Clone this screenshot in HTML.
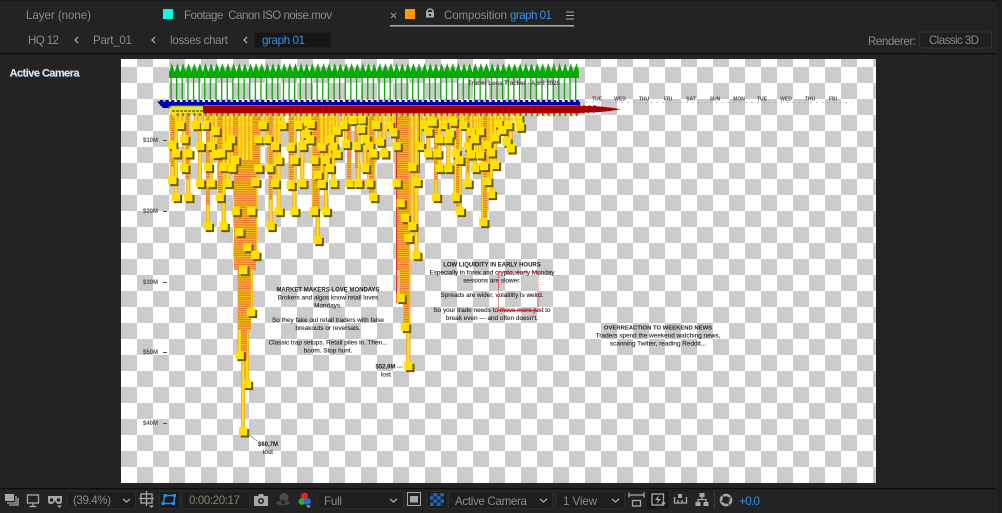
<!DOCTYPE html>
<html><head><meta charset="utf-8"><style>
html,body{margin:0;padding:0;background:#232323;overflow:hidden}
svg{display:block;position:absolute;left:0;top:0}
text{font-family:"Liberation Sans",sans-serif}
.u{font-size:11.6px;fill:#8a8a8a}
.b{fill:#3a8fe6}
.c{font-size:6.4px;fill:#2c2428;text-anchor:middle;stroke:#2c2428;stroke-width:.12}
.h{font-size:6px;fill:#1d1a1a;text-anchor:middle;font-weight:bold}
.d{font-size:5px;fill:#5a4a50;text-anchor:middle;font-weight:bold}
.y{font-size:6px;fill:#555;font-weight:bold}
.i{fill:none;stroke:#a8a8a8;stroke-width:1.3}
.f{fill:#a8a8a8}
</style></head><body>
<svg width="1002" height="513" viewBox="0 0 1002 513">
<defs>
<pattern id="ck" patternUnits="userSpaceOnUse" x="121" y="51" width="32" height="32"><rect width="32" height="32" fill="#fff"/><rect y="16" width="16" height="16" fill="#cbcbcb"/><rect x="16" width="16" height="16" fill="#cbcbcb"/></pattern>
<pattern id="tri" patternUnits="userSpaceOnUse" x="169" y="63" width="5.62" height="15"><path d="M0 9L2.81 0L5.62 9V15H0z" fill="#08a808"/></pattern>
<pattern id="stem" patternUnits="userSpaceOnUse" x="170.4" y="78" width="5.62" height="22"><rect width="1.3" height="22" fill="#08a808"/></pattern>
<pattern id="st" patternUnits="userSpaceOnUse" width="4" height="2.2"><rect width="4" height="2.2" fill="#f6c41c"/><rect width="4" height="1" fill="#e56a30"/></pattern>
<pattern id="tk" patternUnits="userSpaceOnUse" x="170" y="113" width="5.62" height="5"><rect x="1" width="2" height="3" fill="#6d6a55"/><rect x="3" width="1.5" height="4" fill="#e8d25a"/></pattern>
<pattern id="bd" patternUnits="userSpaceOnUse" x="160" y="100" width="5.62" height="2"><rect width="3" height="2" fill="#0000a8"/></pattern>
<pattern id="rd" patternUnits="userSpaceOnUse" x="578" y="105" width="5" height="8"><path d="M0 0L5 1.5V6.5L0 8z" fill="#a80000"/></pattern>
<marker id="m" markerUnits="userSpaceOnUse" overflow="visible" markerWidth="1" markerHeight="1" refX="0" refY="0"><rect x="-6" y="-1500" width="12" height="1500" fill="#f2a81e"/><rect x="-4" y="-1500" width="8" height="1500" fill="#fbd010"/><rect x="-1.500" y="-1500" width="3" height="1500" fill="#ffe33a"/></marker>
<clipPath id="cl"><rect x="121" y="113" width="755" height="370"/></clipPath>
<g id="pts" transform="translate(140 100) scale(.3333)">
<path d="M120 75h.01M167 75h.01M195 75h.01M227 93h.01M368 75h.01M427 75h.01M475 75h.01M503 65h.01M512 72h.01M498 102h.01M510 118h.01M590 92h.01M97 135h.01M133 117h.01M108 160h.01M145 160h.01M180 138h.01M213 138h.01M228 162h.01M263 138h.01M273 117h.01M243 160h.01M355 117h.01M382 117h.01M405 138h.01M452 141h.01M487 138h.01M545 141h.01M570 117h.01M580 140h.01M590 162h.01M285 180h.01M133 204h.01M204 201h.01M250 201h.01M276 203h.01M355 204h.01M388 204h.01M415 180h.01M463 180h.01M523 180h.01M557 180h.01M570 204h.01M97 240h.01M180 249h.01M213 249h.01M263 249h.01M346 246h.01M405 249h.01M452 255h.01M487 249h.01M533 225h.01M545 252h.01M580 249h.01M108 291h.01M145 291h.01M239 291h.01M287 333h.01M334 333h.01M416 333h.01M463 333h.01M522 333h.01M558 333h.01M204 378h.01M251 378h.01M392 378h.01M298 396h.01M533 420h.01M322 441h.01M346 465h.01M310 507h.01"/>
<path transform="translate(600 0)" d="M10 75h.01M38 60h.01M65 58h.01M108 75h.01M148 75h.01M160 97h.01M253 75h.01M278 65h.01M310 75h.01M340 65h.01M370 75h.01M475 70h.01M505 75h.01M540 80h.01M535 55h.01M63 87h.01M77 117h.01M120 125h.01M18 132h.01M50 138h.01M88 138h.01M100 160h.01M133 160h.01M170 138h.01M240 138h.01M265 95h.01M330 100h.01M298 117h.01M325 117h.01M393 95h.01M420 93h.01M405 117h.01M465 112h.01M487 90h.01M500 125h.01M512 145h.01M383 138h.01M442 135h.01M453 157h.01M265 160h.01M292 160h.01M347 160h.01M393 163h.01M420 163h.01M358 180h.01M75 204h.01M217 201h.01M298 204h.01M325 204h.01M405 204h.01M432 198h.01M465 195h.01M28 249h.01M55 249h.01M88 249h.01M170 249h.01M230 246h.01M383 249h.01M442 243h.01M453 282h.01M100 291h.01M288 291h.01M347 291h.01M360 333h.01M182 309h.01M195 354h.01M217 378h.01M430 366h.01M205 414h.01M229 465h.01"/>
<path transform="translate(240 510)" d="M70 0h.01M93 126h.01M59 255h.01M81 342h.01M69 484h.01M542 84h.01M555 171h.01M565 288h.01"/>
</g>
</defs>

<rect width="1002" height="513" fill="#232323"/>
<rect width="1002" height="1.5" fill="#161616"/>
<rect x="997" y="0" width="5" height="513" fill="#1e1e1e"/>
<rect x="0" y="53" width="996" height="1.2" fill="#0c0c0c"/>
<rect x="0" y="488" width="996" height="1.2" fill="#0c0c0c"/>

<!-- top tabs -->
<text class="u" x="26" y="19" textLength="65">Layer  (none)</text>
<rect x="163" y="9" width="10" height="10" fill="#00ffe1"/>
<text class="u" x="184" y="19" textLength="148" xml:space="preserve">Footage  Canon ISO noise.mov</text>
<path d="M391 13l5 5M396 13l-5 5" stroke="#999" stroke-width="1"/>
<rect x="405" y="9" width="10" height="10" fill="#ff9a00"/>
<path d="M427 12.500v-1a3 2.500 0 0 1 6 0v1" fill="none" stroke="#aaa" stroke-width="1.400"/><rect x="426" y="12" width="8" height="5.500" fill="#aaa"/><rect x="429" y="14" width="2" height="2" fill="#232323"/>
<text class="u" x="444" y="19" textLength="63">Composition</text>
<text class="u b" x="510" y="19" textLength="42">graph 01</text>
<path d="M566 12h8M566 15.500h8M566 19h8" stroke="#aaa" stroke-width="1"/>
<rect x="390" y="25" width="184" height="1.600" fill="#a6a6a6"/>

<!-- breadcrumb -->
<text class="u" x="28" y="44" textLength="31">HQ 12</text>
<path d="M78 37l-3 3 3 3" class="i" stroke-width="1"/>
<text class="u" x="93" y="44" textLength="39">Part_01</text>
<path d="M155 37l-3 3 3 3" class="i" stroke-width="1"/>
<text class="u" x="170" y="44" textLength="58">losses chart</text>
<path d="M247 37l-3 3 3 3" class="i" stroke-width="1"/>
<rect x="253" y="32" width="79" height="16" rx="2" fill="#161616" stroke="#2a2a2a"/>
<text class="u b" x="262" y="44" textLength="43">graph 01</text>
<text class="u" x="868" y="45" textLength="48">Renderer:</text>
<rect x="919.500" y="32" width="72" height="16" rx="2" fill="#1f1f1f" stroke="#333"/>
<text class="u" x="929" y="44" textLength="50">Classic 3D</text>

<text x="10" y="77" font-size="11" font-weight="bold" fill="#4a7a9a" textLength="70">Active Camera</text>
<text x="9.500" y="76.500" font-size="11" font-weight="bold" fill="#e2e2e2" textLength="70">Active Camera</text>

<!-- comp area -->
<rect x="121" y="59" width="755" height="424" fill="url(#ck)"/>

<!-- header -->
<rect x="169" y="63" width="410" height="15" fill="url(#tri)"/>
<rect x="169" y="78" width="408" height="22" fill="url(#stem)"/>
<text x="468" y="85" font-size="6.200" font-weight="bold" fill="#4a4a4a" textLength="92">Trader Loss Tracker - April 2025</text>

<!-- bars -->
<g clip-path="url(#cl)">
<use href="#pts" marker-start="url(#m)" marker-mid="url(#m)" marker-end="url(#m)" fill="none" stroke="none"/>
<g fill="url(#st)">
<rect x="171" y="113" width="3.500" height="54"/><rect x="186" y="113" width="3" height="67"/>
<rect x="206" y="113" width="3.500" height="92"/><rect x="218" y="113" width="4.500" height="84"/>
<rect x="233" y="113" width="4" height="60"/><rect x="253" y="113" width="4" height="60"/>
<rect x="234" y="160" width="22" height="110"/><rect x="238" y="270" width="13" height="60"/><rect x="241" y="330" width="6" height="30"/>
<rect x="257" y="113" width="3" height="57"/><rect x="269" y="113" width="3.500" height="87"/>
<rect x="289" y="113" width="5" height="67"/><rect x="313" y="113" width="6" height="97"/>
<rect x="347" y="113" width="4" height="67"/><rect x="355" y="113" width="3" height="55"/>
<rect x="369" y="113" width="5" height="82"/>
<rect x="397" y="113" width="12" height="157"/><rect x="400" y="270" width="9" height="30"/><rect x="404" y="300" width="5" height="25"/>
<rect x="434" y="113" width="3.500" height="67"/><rect x="456" y="113" width="3.500" height="97"/>
<rect x="467" y="113" width="2.500" height="60"/><rect x="483" y="113" width="4.500" height="107"/>
</g>
<rect x="419" y="113" width="1" height="60" fill="#d63a2a"/>
<rect x="396" y="113" width="1.200" height="190" fill="#d63a2a"/>
<use href="#pts" transform="translate(2 2)" fill="none" stroke="#6a5a00" stroke-width="25" stroke-linecap="square"/>
<use href="#pts" fill="none" stroke="#ffe000" stroke-width="25" stroke-linecap="square"/>
</g>
<rect x="170" y="113" width="408" height="5" fill="url(#tk)"/>

<!-- bands -->
<rect x="160" y="100" width="420" height="2" fill="url(#bd)"/>
<rect x="160" y="102" width="420" height="3.500" fill="#0000a8"/>
<path d="M157 101.500H172V105L168 108H163z" fill="#0000a8"/>
<path d="M168 109L172 105.500H204V113H178L172 116z" fill="#f6e020"/>
<path d="M168 109L172 106H204" fill="none" stroke="#3cb52c" stroke-width=".8"/>
<path d="M204 105.800H580" fill="none" stroke="#b8a818" stroke-width=".8"/>
<path d="M172 111H204" stroke="#332" stroke-width="1" stroke-dasharray="3 1"/>
<rect x="203" y="106" width="376" height="7.300" fill="#a80000"/>
<rect x="578" y="105.500" width="20" height="8" fill="url(#rd)"/>
<path d="M578 106L600 106.500L610 107.500L621 109.300L610 111L600 112L578 113z" fill="#a80000"/>

<!-- timeline -->
<path d="M580 102.500H852" stroke="#aaa" stroke-width="1" stroke-dasharray="1.500 4.400"/>
<g class="d">
<text class="d" x="597" y="100.500">TUE</text><text class="d" x="620" y="100.500">WED</text><text class="d" x="644" y="100.500">THU</text><text class="d" x="668" y="100.500">FRI</text><text class="d" x="691" y="100.500">SAT</text><text class="d" x="715" y="100.500">SUN</text><text class="d" x="739" y="100.500">MON</text><text class="d" x="762" y="100.500">TUE</text><text class="d" x="786" y="100.500">WED</text><text class="d" x="810" y="100.500">THU</text><text class="d" x="833" y="100.500">FRI</text>
</g>

<!-- axis -->
<text class="y" x="143" y="142">$10M</text><rect x="163" y="140" width="4" height="1" fill="#555"/>
<text class="y" x="143" y="213">$20M</text><rect x="163" y="211" width="4" height="1" fill="#555"/>
<text class="y" x="143" y="284">$30M</text><rect x="163" y="282" width="4" height="1" fill="#555"/>
<text class="y" x="143" y="354">$50M</text><rect x="163" y="352" width="4" height="1" fill="#555"/>
<text class="y" x="143" y="425">$40M</text><rect x="163" y="423" width="4" height="1" fill="#555"/>

<!-- copy -->
<text class="h" x="328" y="291.500">MARKET MAKERS LOVE MONDAYS</text>
<text class="c" x="328" y="299.500">Brokers and algos know retail loves</text>
<text class="c" x="328" y="307.500">Mondays.</text>
<text class="c" x="328" y="322">So they fake out retail traders with false</text>
<text class="c" x="328" y="330">breakouts or reversals.</text>
<text class="c" x="328" y="344.500">Classic trap setups. Retail piles in. Then...</text>
<text class="c" x="328" y="352.500">boom. Stop hunt.</text>

<text class="h" x="492" y="266.500">LOW LIQUIDITY IN EARLY HOURS</text>
<text class="c" x="492" y="274.500">Especially in forex and crypto, early Monday</text>
<text class="c" x="492" y="282.500">sessions are slower.</text>
<text class="c" x="492" y="297">Spreads are wider, volatility is weird.</text>
<text class="c" x="492" y="312">So your trade needs to move more just to</text>
<text class="c" x="492" y="320">break even — and often doesn't.</text>
<path d="M498.500 272V310M538 272V310M498 272H538" fill="none" stroke="#e8232a" stroke-width="1" stroke-dasharray="1.200 1.200"/>
<path d="M498 310.500H538" stroke="#e8232a" stroke-width="1.200"/>

<text class="h" x="658" y="329.500" style="font-size:5.900px">OVERREACTION TO WEEKEND NEWS</text>
<text class="c" x="658" y="337.500">Traders spend the weekend watching news,</text>
<text class="c" x="658" y="345.500">scanning Twitter, reading Reddit...</text>

<path d="M248 434L257 441M397 367H403" stroke="#777" stroke-width=".7" fill="none"/>
<text class="h" x="268" y="446">$60,7M</text><text class="c" x="268" y="454">lost</text>
<text class="h" x="385.500" y="368.500">$52,9M</text><text class="c" x="386" y="376.500">lost</text>

<!-- toolbar -->
<g class="i">
<rect x="5" y="494" width="9" height="7" fill="#a8a8a8" stroke="none"/><path d="M16 496V503H7M18 498V505H9"/>
<rect x="27.500" y="495" width="11" height="8"/><path d="M33 503V506M29.500 506.500H36.500"/>
</g>
<path d="M48 496H62V501Q62 504 59 504Q56 504 55 500.500Q54 504 51 504Q48 504 48 501z" fill="#a8a8a8"/><circle cx="51.500" cy="500" r="1.800" fill="#232323"/><circle cx="58.500" cy="500" r="1.800" fill="#232323"/><path d="M57 505.500H62L59.500 508z" fill="#a8a8a8"/>

<rect x="67.500" y="491.500" width="68" height="17" rx="2" fill="#1e1e1e" stroke="#2c2c2c"/>
<text class="u" x="73" y="504" textLength="38">(39.4%)</text>
<path class="i" d="M123 499l3.500 3 3.500-3" stroke-width="1"/>
<rect class="i" x="141" y="494" width="11" height="9"/><path class="i" d="M146.500 491V506M139 498.500H154" stroke-width="1"/><path d="M149 505.500H154L151.500 508z" fill="#a8a8a8"/>
<rect x="159.500" y="491.500" width="20" height="17" rx="2" fill="#1a1a1a" stroke="#2c2c2c"/>
<path d="M165 495.500H175L173.500 503.500H163z" fill="none" stroke="#2d8ceb" stroke-width="1.500"/><rect x="163.500" y="494" width="3" height="3" fill="#2d8ceb"/><rect x="173" y="494" width="3" height="3" fill="#2d8ceb"/><rect x="161.500" y="502" width="3" height="3" fill="#2d8ceb"/><rect x="172" y="502" width="3" height="3" fill="#2d8ceb"/>
<rect x="181.500" y="491.500" width="68" height="17" rx="2" fill="#1e1e1e" stroke="#2c2c2c"/>
<text class="u" x="189" y="504" textLength="51" style="fill:#8a8070">0:00:20:17</text>
<path d="M254 496H258L259 494H263L264 496H268V506H254z" fill="#a8a8a8"/><circle cx="261" cy="501" r="3" fill="#232323"/><circle cx="261" cy="501" r="1.500" fill="#a8a8a8"/>
<circle cx="284" cy="497.500" r="4.500" fill="#4a4a4a"/><path d="M276 503a8 4.500 0 0 1 14 0a8 4.500 0 0 1-14 0z" fill="#4a4a4a"/><circle cx="283" cy="502" r="2.200" fill="#232323"/>
<circle cx="304.500" cy="496" r="3.400" fill="#ee1c25"/><circle cx="302" cy="501.500" r="3.400" fill="#22b422"/><circle cx="307.500" cy="501.500" r="3.400" fill="#1f6fe0"/><path d="M306 505.500H311L308.500 508z" fill="#a8a8a8"/>
<rect x="317.500" y="491.500" width="86" height="17" rx="2" fill="#1e1e1e" stroke="#2c2c2c"/>
<text class="u" x="324" y="505" textLength="18">Full</text>
<path class="i" d="M390 499l3.500 3 3.500-3" stroke-width="1"/>
<rect x="407.500" y="492.500" width="13" height="13" fill="none" stroke="#a8a8a8" stroke-width="1"/><rect x="410" y="496" width="8" height="6.500" fill="#a8a8a8"/>
<rect x="427" y="491.500" width="20" height="17" rx="2" fill="#1a1a1a" stroke="#2c2c2c"/>
<rect x="430" y="493" width="14" height="13" fill="#2366ad"/><path d="M430 493h3.500v3.250h-3.500zM437 493h3.500v3.250h-3.500zM433.500 496.250h3.500v3.250h-3.500zM440.500 496.250h3.500v3.250h-3.500zM430 499.500h3.500v3.250h-3.500zM437 499.500h3.500v3.250h-3.500zM433.500 502.750h3.500v3.250h-3.500zM440.500 502.750h3.500v3.250h-3.500z" fill="#12304e"/>
<rect x="448.500" y="491.500" width="104" height="17" rx="2" fill="#1e1e1e" stroke="#2c2c2c"/>
<text class="u" x="455" y="505" textLength="72">Active Camera</text>
<path class="i" d="M540 499l3.500 3 3.500-3" stroke-width="1"/>
<rect x="556.500" y="491.500" width="68" height="17" rx="2" fill="#1e1e1e" stroke="#2c2c2c"/>
<text class="u" x="563" y="505" textLength="34">1 View</text>
<path class="i" d="M612 499l3.500 3 3.500-3" stroke-width="1"/>
<path class="i" d="M629 495H644M629 492.500V497.500M644 492.500V497.500" stroke-width="1.100"/><rect class="i" x="632.500" y="500.500" width="8" height="5.500"/>
<rect x="647" y="491" width="22" height="18" rx="2" fill="#1a1a1a"/>
<rect class="i" x="652" y="494" width="11.500" height="11" stroke-width="1.100"/><path d="M659 495L655 500H658L656.500 504L661 499H658z" fill="#a8a8a8"/><path d="M661 502.500H666L663.500 505.500z" fill="#a8a8a8"/>
<path d="M678 494h4v4h-4z" fill="#a8a8a8"/><path class="i" d="M674.500 497V503H686.500V497M678 500V503M682 500V503" stroke-width="1.100"/>
<path d="M699.500 493h5v4h-5zM695.500 502h5v4h-5zM703.500 502h5v4h-5z" fill="#a8a8a8"/><path class="i" d="M702 497V499.500M698 502V499.500H706V502" stroke-width="1.100"/>
<rect x="714" y="491" width="1" height="18" fill="#3a3a3a"/>
<circle cx="726" cy="500" r="5" fill="none" stroke="#a8a8a8" stroke-width="2.600"/><path d="M722 495L726 500M731 497L726 500M729 505L726 500M721 502L726 500" stroke="#232323" stroke-width="1"/>
<text x="739" y="505" font-size="12" fill="#2d8ceb" textLength="21">+0.0</text>
</svg>
</body></html>
